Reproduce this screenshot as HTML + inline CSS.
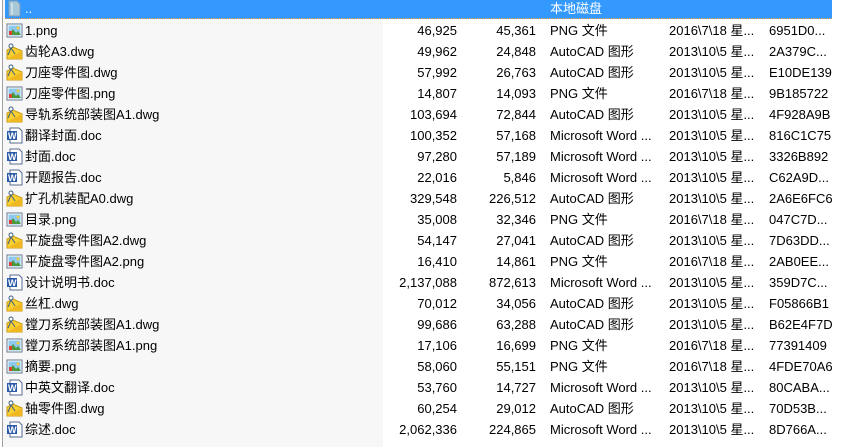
<!DOCTYPE html>
<html><head><meta charset="utf-8"><style>
body{margin:0;width:844px;height:447px;background:#fff;overflow:hidden;font-family:"Liberation Sans","Noto Sans CJK SC",sans-serif;font-size:13px;color:#000;position:relative}
.namebg{position:absolute;left:3px;top:0;width:380px;height:447px;background:#f7f7f7}
.vline{position:absolute;left:2px;top:0;width:1px;height:447px;background:#a0a0a0}
.row{position:absolute;left:0;width:844px;height:21px;line-height:21px;white-space:nowrap}
.row span{position:absolute}
.ic{position:absolute;left:6px;top:2px;width:17px;height:17px}
.n{left:25px}
.s{right:387px;text-align:right}
.p{right:308px;text-align:right}
.t{left:550px}
.d{left:669px}
.c{left:769px}
.sel{background:#3399ff;color:#fff;height:19px;line-height:19px;left:5px;width:827px;border-bottom:1px dotted #f5a040}
</style></head><body>
<div class="namebg"></div><div class="vline"></div>
<div class="row sel" style="top:-1px"><svg class="ic" style="left:1px;top:1px" viewBox="0 0 17 17"><path d="M3 1h8l3 3v12H3z" fill="#a8c8d8" stroke="#7aa0b8"/><rect x="5" y="3" width="2" height="12" fill="#c8e0ec"/></svg><span style="left:20px">..</span><span style="left:545px">本地磁盘</span></div>
<div id="rows"></div>
<script>
var d=[["1.png","46,925","45,361","PNG 文件","2016\\7\\18 星...","6951D0...","p"],
["齿轮A3.dwg","49,962","24,848","AutoCAD 图形","2013\\10\\5 星...","2A379C...","a"],
["刀座零件图.dwg","57,992","26,763","AutoCAD 图形","2013\\10\\5 星...","E10DE139","a"],
["刀座零件图.png","14,807","14,093","PNG 文件","2016\\7\\18 星...","9B185722","p"],
["导轨系统部装图A1.dwg","103,694","72,844","AutoCAD 图形","2013\\10\\5 星...","4F928A9B","a"],
["翻译封面.doc","100,352","57,168","Microsoft Word ...","2013\\10\\5 星...","816C1C75","w"],
["封面.doc","97,280","57,189","Microsoft Word ...","2013\\10\\5 星...","3326B892","w"],
["开题报告.doc","22,016","5,846","Microsoft Word ...","2013\\10\\5 星...","C62A9D...","w"],
["扩孔机装配A0.dwg","329,548","226,512","AutoCAD 图形","2013\\10\\5 星...","2A6E6FC6","a"],
["目录.png","35,008","32,346","PNG 文件","2016\\7\\18 星...","047C7D...","p"],
["平旋盘零件图A2.dwg","54,147","27,041","AutoCAD 图形","2013\\10\\5 星...","7D63DD...","a"],
["平旋盘零件图A2.png","16,410","14,861","PNG 文件","2016\\7\\18 星...","2AB0EE...","p"],
["设计说明书.doc","2,137,088","872,613","Microsoft Word ...","2013\\10\\5 星...","359D7C...","w"],
["丝杠.dwg","70,012","34,056","AutoCAD 图形","2013\\10\\5 星...","F05866B1","a"],
["镗刀系统部装图A1.dwg","99,686","63,288","AutoCAD 图形","2013\\10\\5 星...","B62E4F7D","a"],
["镗刀系统部装图A1.png","17,106","16,699","PNG 文件","2016\\7\\18 星...","77391409","p"],
["摘要.png","58,060","55,151","PNG 文件","2016\\7\\18 星...","4FDE70A6","p"],
["中英文翻译.doc","53,760","14,727","Microsoft Word ...","2013\\10\\5 星...","80CABA...","w"],
["轴零件图.dwg","60,254","29,012","AutoCAD 图形","2013\\10\\5 星...","70D53B...","a"],
["综述.doc","2,062,336","224,865","Microsoft Word ...","2013\\10\\5 星...","8D766A...","w"]];
var ic={p:'<svg class="ic" viewBox="0 0 17 17"><rect x="1" y="2" width="15" height="13" fill="#fff" stroke="#6a7a90"/><rect x="2.5" y="3.5" width="12" height="10" fill="#8ec8f0"/><path d="M3 13l4-6 3 4 2-2 3 4z" fill="#4a9a3a"/><circle cx="12" cy="6" r="1.5" fill="#f0d040"/><rect x="3" y="9" width="3" height="4" fill="#e04030"/></svg>',
a:'<svg class="ic" viewBox="0 0 17 17"><path d="M1 16V7l6-3 9 4v8z" fill="#f8d030" stroke="#c89a10"/><path d="M1 16l15-8v8z" fill="#f0b820"/><circle cx="5" cy="3" r="2" fill="#fff" stroke="#406080"/><path d="M5 5L2 12M5 5l4 6" stroke="#406080"/></svg>',
w:'<svg class="ic" viewBox="0 0 17 17"><path d="M4 1h9l3 3v12H4z" fill="#fff" stroke="#5a6a90"/><rect x="1" y="4" width="10" height="9" fill="#2a5aa8"/><text x="2" y="12" font-size="9" font-weight="bold" fill="#fff" font-family="Liberation Sans">W</text></svg>'};
var h='';d.forEach(function(r,i){h+='<div class="row" style="top:'+(20+i*21)+'px">'+ic[r[6]]+'<span class="n">'+r[0]+'</span><span class="s">'+r[1]+'</span><span class="p">'+r[2]+'</span><span class="t">'+r[3]+'</span><span class="d">'+r[4]+'</span><span class="c">'+r[5]+'</span></div>';});
document.getElementById('rows').innerHTML=h;
</script>
</body></html>
